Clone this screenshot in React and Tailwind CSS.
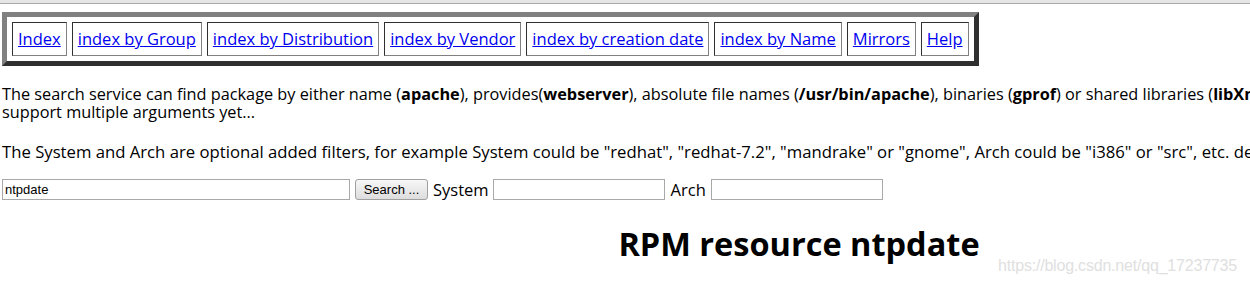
import React from "react";

const links = [
  "Index",
  "index by Group",
  "index by Distribution",
  "index by Vendor",
  "index by creation date",
  "index by Name",
  "Mirrors",
  "Help",
];

export default function App() {
  return (
    <div className="relative w-[1250px] h-[286px] overflow-hidden bg-white text-black font-['Open_Sans','Noto_Sans',sans-serif]">
      <div className="h-[4px] bg-[#e6e6e6] border-b border-[#a8a8a8]" />
      <div className="w-[1596px] pl-[2px] pt-[8px]">
        <table className="border-separate border-spacing-[5px] border-[5px] border-t-[#808080] border-l-[#808080] border-r-[#303030] border-b-[#303030]">
          <tbody>
            <tr>
              {links.map((l) => (
                <td
                  key={l}
                  className="border border-t-[#303030] border-l-[#303030] border-r-[#808080] border-b-[#808080] px-[5px] py-[5px] text-[16.5px] leading-[22px] whitespace-nowrap"
                >
                  <a href="#" className="text-[#0000ee] underline">
                    {l}
                  </a>
                </td>
              ))}
            </tr>
          </tbody>
        </table>
        <p className="mt-[19px] text-[16.3px] leading-[18px]">
          The search service can find package by either name (<b>apache</b>), provides(<b>webserver</b>), absolute file names (<b>/usr/bin/apache</b>), binaries (<b>gprof</b>) or shared libraries (<b>libXm.so.2</b>) in standard path. It does not
          <br />
          support multiple arguments yet...
        </p>
        <p className="mt-[22px] text-[16.7px] leading-[18px] whitespace-nowrap">
          The System and Arch are optional added filters, for example System could be "redhat", "redhat-7.2", "mandrake" or "gnome", Arch could be "i386" or "src", etc. depending on your system.
        </p>
        <form className="mt-[18px] flex items-center text-[16.5px]" onSubmit={(e) => e.preventDefault()}>
          <input
            defaultValue="ntpdate"
            className="w-[348px] h-[21px] border border-[#a9a9a9] px-[2px] text-[13px] font-['Liberation_Sans',Arial,sans-serif] outline-none"
          />
          <button
            type="button"
            className="ml-[5px] w-[73px] h-[21px] border border-[#a0a0a0] rounded-[3px] bg-gradient-to-b from-[#f7f7f7] to-[#dddddd] text-[13px] leading-[18px] font-['Liberation_Sans',Arial,sans-serif] text-black"
          >
            Search ...
          </button>
          <span className="ml-[5px] leading-[21px]">System</span>
          <input className="ml-[4px] w-[172px] h-[21px] border border-[#a9a9a9] outline-none" />
          <span className="ml-[6px] leading-[21px]">Arch</span>
          <input className="ml-[5px] w-[172px] h-[21px] border border-[#a9a9a9] outline-none" />
        </form>
        <h1 className="mt-[24px] text-center text-[32.5px] leading-[40px] font-bold">
          RPM resource ntpdate
        </h1>
      </div>
      <div className="absolute left-[998px] top-[256px] text-[16px] leading-[20px] tracking-[-0.2px] text-[#e0e0e0] font-['Liberation_Sans',Arial,sans-serif] whitespace-nowrap">
        https://blog.csdn.net/qq_17237735
      </div>
    </div>
  );
}
